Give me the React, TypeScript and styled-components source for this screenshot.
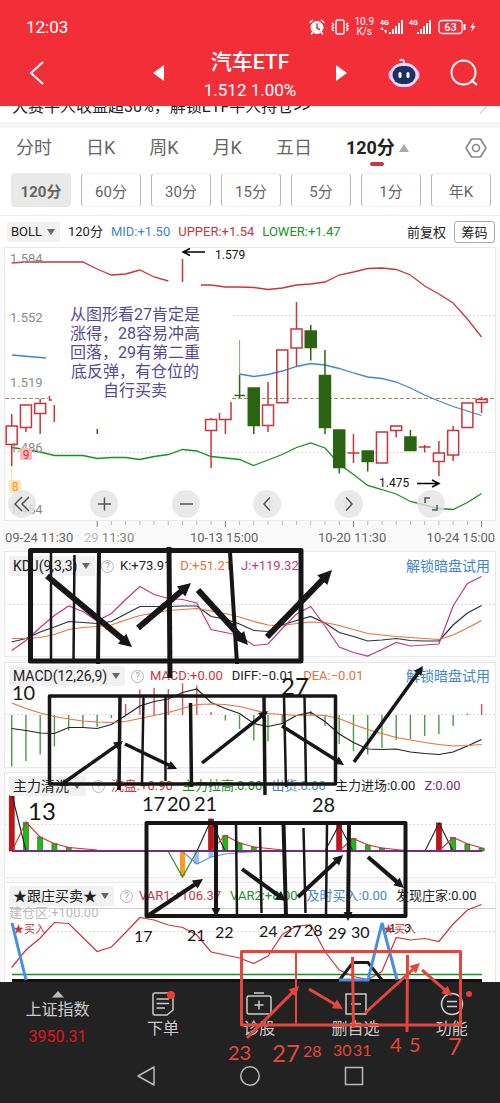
import React from 'react';
import styled, { createGlobalStyle } from 'styled-components';

const C = {
  brand: '#f22f38',
  up: '#c9353d',
  down: '#2b6412',
  red: '#c9353d',
  blue: '#3f86cc',
  green: '#17911f',
  orange: '#e8713a',
  magenta: '#c23a7e',
  purple: '#7a2a80',
  ink: '#222',
  marker: '#161616',
  redMarker: '#e5453b',
  dark: '#222',
};

const GlobalStyle = createGlobalStyle`
  * { box-sizing: border-box; }
  body {
    margin: 0;
    background: #fff;
    font-family: Roboto, "Noto Sans CJK SC", sans-serif;
    color: #222;
  }
  button, select { font: inherit; color: inherit; border: 0; background: none; padding: 0; margin: 0; }
  svg { display: block; }
`;

const Page = styled.div`
  position: relative;
  overflow: hidden;
`;

const Header = styled.header`
  background: ${C.brand};
  color: #fff;
  height: 106px;
  padding-top: 14px;
`;

const StatusBar = styled.div`
  display: flex;
  align-items: center;
  height: 26px;
  padding: 0 24px 0 26px;
  font-size: 17px;
`;

const StatusIcons = styled.div`
  display: flex;
  align-items: center;
  margin-left: auto;
  gap: 6px;
`;

const Speed = styled.div`
  font-size: 10px;
  line-height: 10px;
  text-align: center;
`;

const TitleBar = styled.div`
  display: grid;
  grid-template-columns: 1fr auto 1fr;
  align-items: center;
  height: 66px;
  padding: 0 22px 0 28px;
`;

const TitleSide = styled.div<{ $end?: boolean }>`
  display: flex;
  align-items: center;
  justify-content: ${(p) => (p.$end ? 'flex-start' : 'space-between')};
  gap: ${(p) => (p.$end ? '30px' : '0')};
`;

const IconButton = styled.button`
  display: flex;
  flex: none;
`;

const TitleBlock = styled.div`
  width: 172px;
  padding-top: 5px;
  text-align: center;
`;

const Title = styled.h1`
  margin: 0;
  font-size: 21px;
  line-height: 28px;
  font-weight: 500;
`;

const Quote = styled.div`
  font-size: 17px;
  line-height: 28px;
`;

const Promo = styled.a`
  display: flex;
  align-items: flex-end;
  justify-content: space-between;
  height: 22px;
  padding: 0 12px;
  overflow: hidden;
  border-bottom: 6px solid #f5f5f5;
  color: #222;
  font-size: 16px;
  line-height: 30px;
  text-decoration: none;
`;

const PeriodTabs = styled.nav`
  display: flex;
  align-items: center;
  height: 40px;
  padding: 0 13px 0 16px;
`;

const PeriodTab = styled.button<{ $active?: boolean }>`
  position: relative;
  flex: none;
  margin-right: ${(p) => (p.$active ? '4px' : '34px')};
  font-size: 18px;
  line-height: 36px;
  color: ${(p) => (p.$active ? '#222' : '#666')};
  font-weight: ${(p) => (p.$active ? 700 : 400)};
  &::after {
    content: '';
    display: ${(p) => (p.$active ? 'block' : 'none')};
    position: absolute;
    left: 50%;
    bottom: 0;
    width: 14px;
    height: 4px;
    border-radius: 2px;
    background: ${C.up};
  }
`;

const Push = styled.span`
  margin-left: auto;
`;

const Pills = styled.div`
  display: flex;
  gap: 10px;
  height: 48px;
  padding: 5px 0 9px 11px;
  overflow: hidden;
  border-bottom: 1px solid #eee;
`;

const Pill = styled.button<{ $active?: boolean }>`
  flex: none;
  width: 60px;
  height: 34px;
  border: 1px solid ${(p) => (p.$active ? '#e9e9e9' : '#b8b8b8')};
  border-top-color: ${(p) => (p.$active ? '#e9e9e9' : '#f0f0f0')};
  border-bottom-color: ${(p) => (p.$active ? '#e9e9e9' : '#f0f0f0')};
  border-radius: 4px;
  background: ${(p) => (p.$active ? '#e9e9e9' : '#fff')};
  color: #666;
  font-size: 15px;
  font-weight: ${(p) => (p.$active ? 700 : 400)};
`;

const LegendRow = styled.div`
  display: flex;
  align-items: center;
  gap: 8px;
  height: 31px;
  padding: 0 5px 0 7px;
  font-size: 13px;
  white-space: nowrap;
`;

const SmallText = styled.span<{ $color?: string }>`
  line-height: 20px;
  color: ${(p) => p.$color || C.ink};
`;

const ChipButton = styled.button`
  width: 41px;
  height: 22px;
  border: 1px solid #aaa;
  border-radius: 3px;
  font-size: 13px;
`;

const Picker = styled.label<{ $size: number }>`
  display: inline-flex;
  align-items: center;
  gap: 3px;
  height: 20px;
  padding: 0 4px;
  background: #f1f1f1;
  border-radius: 2px;
  font-size: ${(p) => p.$size}px;
`;

const PickerSelect = styled.select`
  appearance: none;
  outline: 0;
  line-height: 20px;
`;

const ChartArea = styled.section`
  position: relative;
  background: #fafafa;
`;

const Drawing = styled.svg`
  width: 100%;
  height: auto;
  overflow: visible;
`;

const Note = styled.p`
  position: absolute;
  left: 0;
  top: 58px;
  width: 54%;
  margin: 0;
  font-size: 16px;
  line-height: 19px;
  text-align: center;
  color: #554a97;
`;

const Controls = styled.div`
  position: absolute;
  left: 8px;
  right: 55px;
  top: 243px;
  display: flex;
  justify-content: space-between;
`;

const RoundButton = styled.button`
  display: flex;
  align-items: center;
  justify-content: center;
  width: 28px;
  height: 28px;
  border-radius: 50%;
  background: rgba(228, 228, 228, 0.8);
`;

const Panel = styled.section<{ $cut?: boolean }>`
  display: grid;
  height: ${(p) => (p.$cut ? 101 : 110)}px;
  overflow: ${(p) => (p.$cut ? 'hidden' : 'visible')};
  background: #fafafa;
  > * { grid-area: 1 / 1; }
`;

const PanelHead = styled.div`
  display: flex;
  align-items: center;
  gap: 6px;
  height: 20px;
  margin-top: 5px;
  padding: 0 10px 0 9px;
  font-size: 13px;
  white-space: nowrap;
  z-index: 1;
`;

const Values = styled.div`
  display: flex;
  align-items: baseline;
  gap: 9px;
  line-height: 20px;
`;

const Help = styled.button`
  width: 13px;
  height: 13px;
  flex: none;
  border: 1px solid #b5b5b5;
  border-radius: 50%;
  color: #aaa;
  font-size: 10px;
  line-height: 11px;
`;

const Unlock = styled.a`
  margin-left: auto;
  color: ${C.blue};
  font-size: 14px;
  line-height: 20px;
  text-decoration: none;
`;

const BottomNav = styled.nav`
  display: grid;
  grid-template-columns: 115px repeat(4, 1fr);
  height: 68px;
  background: ${C.dark};
  color: #ccc;
`;

const NavItem = styled.button`
  position: relative;
  display: flex;
  flex-direction: column;
  align-items: center;
  padding-top: 8px;
  font-size: 16px;
  line-height: 24px;
`;

const IndexValue = styled.span`
  color: #e0161c;
  line-height: 30px;
`;

const Dot = styled.span<{ $far?: boolean }>`
  position: absolute;
  top: 9px;
  left: ${(p) => (p.$far ? '62px' : '52px')};
  width: ${(p) => (p.$far ? '6px' : '8px')};
  height: ${(p) => (p.$far ? '6px' : '8px')};
  border-radius: 50%;
  background: #ee3a33;
`;

const SystemNav = styled.div`
  display: flex;
  justify-content: center;
  align-items: flex-start;
  gap: 84px;
  height: 53px;
  padding-top: 16px;
  background: ${C.dark};
`;

const Markup = styled.svg`
  position: absolute;
  left: 0;
  top: 0;
  width: 100%;
  height: 100%;
  pointer-events: none;
  z-index: 2;
`;

/* ---------- chart data ---------- */

const xAt = (i: number) => 11.7 + 14.24 * i;
const pts = (values: number[], start = 0) =>
  values.map((v, k) => `${xAt(start + k).toFixed(1)},${v}`).join(' ');

/* index, high, body top, body bottom, low, rising */
type Candle = [number, number, number, number, number, boolean];
const candles: Candle[] = [
  [0, 414, 426, 444.5, 466, true],
  [1, 405, 405, 427.5, 432, true],
  [2, 399, 403.5, 413.5, 434, true],
  [14, 418, 419.5, 430.5, 468, true],
  [17, 388, 388, 425.5, 434, false],
  [18, 382, 405, 425.5, 432, true],
  [19, 350, 350, 402.7, 402.7, true],
  [20, 302, 329, 348, 366, true],
  [21, 325, 331, 347.5, 360.5, false],
  [22, 350, 375.5, 427.5, 434, false],
  [23, 430, 430, 467.5, 473.5, false],
  [24, 434, 453, 453, 463, true],
  [25, 451, 451, 461.5, 471.5, false],
  [26, 432, 432, 463, 463, true],
  [27, 426, 426, 430.5, 437.5, true],
  [28, 430, 437, 450.5, 450.5, false],
  [29, 445, 447, 447, 452.5, true],
  [30, 441, 453, 461.5, 476, true],
  [31, 426, 430.5, 455, 461, true],
  [32, 403, 403, 427.5, 427.5, true],
  [33, 397, 399.5, 402.5, 413, true],
];

const upperA = [263, 262, 262, 262, 262, 262, 269, 275, 274, 270, 277, 281];
const upperB = [285, 287, 287, 287.5, 289.5, 288, 285, 284, 282, 275, 272, 268.5, 268, 269.5, 275, 286, 294, 303, 319, 337];
const mid = [374, 376.5, 374.5, 371, 366.5, 363.5, 365, 368.5, 373, 377, 378.5, 382, 388, 395, 401, 406.5, 411, 415.5];
const lower = [447.5, 449.5, 452, 455.5, 455.5, 455.5, 458.5, 457.5, 457.5, 459.5, 456.5, 454.5, 449.5, 451, 456.5, 458, 459.5, 465.5, 460, 454.5, 447.5, 443, 448, 464, 474.5, 485.5, 489.5, 494, 501.5, 505, 508.5, 509.5, 502.5, 493.5];

const kdjJ = [650.5, 640.5, 627.5, 615.5, 606, 611.5, 621, 613.5, 599.5, 586.5, 594.5, 598.5, 599.5, 603, 629.5, 632.5, 635.5, 645.5, 644, 628.5, 614, 606.5, 626, 647, 652.5, 656, 649.5, 642.5, 646, 645, 644, 606, 583.5, 576.5];
const kdjK = [642, 638.5, 632, 627, 621.5, 622.5, 623.5, 621.5, 614, 606.5, 606.5, 606.5, 606, 606, 616.5, 619, 624, 630.5, 631.5, 625, 620.5, 616.5, 623, 632.5, 636.5, 641, 640, 638.5, 640.5, 641, 641, 625, 613, 605.5];
const kdjD = [638.5, 638.5, 637.5, 634.5, 629.5, 627.5, 626.5, 625, 620, 615.5, 613, 610.5, 609.5, 608.5, 611, 613.5, 617, 621.5, 625, 625.5, 623.5, 622, 622.5, 625.5, 629.5, 633.5, 635, 636.5, 637.5, 638.5, 639.5, 635, 628, 620.5];

const diff = [728.5, 730.5, 733, 733.5, 727.5, 727.5, 728.5, 724.5, 715.5, 706, 701.5, 699, 692.5, 689, 702.5, 708.5, 713.5, 723.5, 726.5, 723.5, 715.5, 712.5, 721.5, 734, 742.5, 749, 749.5, 749, 752, 753.5, 754.5, 752, 746, 739.5];
const dea = [703, 708.5, 713, 716.5, 719, 721, 722, 722.5, 721.5, 718.5, 715.5, 712.5, 708.5, 704.5, 704, 704.5, 706.5, 710, 713.5, 714.5, 715.5, 715, 715.5, 718.5, 724.5, 729.5, 733.5, 737.5, 740, 742.5, 744.5, 746, 745.5, 744.5];
const macdBars = [766.5, 761, 754.5, 746.5, 730.5, 727, 727, 718, 704, 689.5, 688, 689, 683.5, 685.5, 712, 720.5, 729, 740.5, 741.5, 724, 716, 711, 726, 744, 751, 754.5, 748, 740, 739, 736, 734, 726, 713.5, 704];

const redBars: [number, number][] = [[0, 795], [14, 819], [23, 825], [30, 823]];
const greenBars: [number, number][] = [
  [1, 822.5], [2, 837], [3, 843.5], [4, 847.5], [15, 835.5], [16, 843], [17, 847],
  [24, 838.5], [25, 845], [26, 848], [31, 837.5], [32, 844], [33, 848],
];

const var1 = [967.5, 950, 938, 922.5, 923.5, 937.5, 951.5, 947, 932.5, 917.5, 920, 925, 927.5, 935, 952, 955, 958, 963.5, 956, 934.5, 926, 925, 951.5, 970, 976.5, 979.5, 971.5, 937.5, 940, 938.5, 941.5, 924, 910, 904.5];

/* ---------- shared pieces ---------- */

const Caret = ({ up, color = '#666' }: { up?: boolean; color?: string }) => (
  <svg width="10" height="8" viewBox="0 0 10 8">
    <path d={up ? 'M5 0L10 8H0z' : 'M1 1H9L5 7z'} fill={color} />
  </svg>
);

const IndicatorPicker = ({ name, size = 14 }: { name: string; size?: number }) => (
  <Picker $size={size}>
    <PickerSelect aria-label={name} defaultValue={name}>
      <option>{name}</option>
    </PickerSelect>
    <Caret />
  </Picker>
);

const Frame = ({ y, h, dash }: { y: number; h: number; dash: number }) => (
  <>
    <rect x="4.5" y={y + 0.5} width="491" height={h} fill="#fff" stroke="#e9e9e9" />
    <path d={`M5 ${dash}.5H495`} stroke="#ddd" strokeDasharray="2 2" />
  </>
);

type ArrowProps = { from: [number, number]; to: [number, number]; w?: number; head?: number; color?: string };
const Arrow = ({ from, to, w = 4, head = 11, color = C.marker }: ArrowProps) => {
  const a = Math.atan2(to[1] - from[1], to[0] - from[0]);
  const bx = to[0] - Math.cos(a) * head;
  const by = to[1] - Math.sin(a) * head;
  const s = head * 0.5;
  const p = [
    [to[0], to[1]],
    [bx - Math.sin(a) * s, by + Math.cos(a) * s],
    [bx + Math.sin(a) * s, by - Math.cos(a) * s],
  ];
  return (
    <g>
      <line x1={from[0]} y1={from[1]} x2={bx + Math.cos(a)} y2={by + Math.sin(a)} stroke={color} strokeWidth={w} />
      <polygon points={p.map((q) => q.map((n) => n.toFixed(1)).join(',')).join(' ')} fill={color} />
    </g>
  );
};

/* ---------- sections ---------- */

const TopHeader = () => (
  <Header>
    <StatusBar>
      12:03
      <StatusIcons>
        <svg width="16" height="16" viewBox="0 0 16 16" fill="none" stroke="#fff" strokeLinecap="round">
          <circle cx="8" cy="8.5" r="6" fill="#fff" />
          <path d="M1 3.5L3.5 1.2M15 3.5L12.5 1.2M3.5 13.5L2.5 15M12.5 13.5L13.5 15" strokeWidth="1.5" />
          <path d="M8 5V9L10.5 10.5" stroke={C.brand} strokeWidth="1.5" />
        </svg>
        <svg width="18" height="16" viewBox="0 0 18 16" fill="none" stroke="#fff" strokeWidth="1.4">
          <rect x="5" y="1" width="8" height="14" rx="1.5" />
          <path d="M1 4L2.5 5.5L1 7L2.5 8.5L1 10L2.5 12M17 4L15.5 5.5L17 7L15.5 8.5L17 10L15.5 12" />
        </svg>
        <Speed>10.9<br />K/s</Speed>
        <svg width="52" height="16" viewBox="0 0 52 16" fill="#fff">
          <text x="0" y="6" fontSize="7" fontWeight="700">4G</text>
          <text x="29" y="6" fontSize="7" fontWeight="700">4G</text>
          <path d="M0 11l2-3 2 3zM4 11l2 4 1-4zM9 13h2v2H9zM12 10h2v5h-2zM15 7h2v8h-2zM18 4h2v11h-2zM21 1h2v14h-2z" />
          <path d="M37 13h2v2h-2zM40 10h2v5h-2zM43 7h2v8h-2zM46 4h2v11h-2zM49 1h2v14h-2z" />
        </svg>
        <svg width="38" height="16" viewBox="0 0 38 16" fill="none" stroke="#fff" strokeWidth="1.3">
          <rect x="1" y="1.5" width="23" height="13" rx="3" />
          <path d="M26.5 5V11" strokeWidth="2" />
          <path d="M36 3L32 8.5H34.5L33 13L37.5 7H35z" fill="#fff" stroke="none" />
          <text x="12.5" y="12" fontSize="11" fontWeight="500" textAnchor="middle" fill="#fff" stroke="none">63</text>
        </svg>
      </StatusIcons>
    </StatusBar>
    <TitleBar>
      <TitleSide>
        <IconButton aria-label="返回">
          <svg width="18" height="26" viewBox="0 0 18 26" fill="none" stroke="#fff" strokeWidth="2"><path d="M15 2L3 13L15 24" /></svg>
        </IconButton>
        <IconButton aria-label="上一个">
          <svg width="11" height="16" viewBox="0 0 11 16"><path d="M0 8L11 0V16z" fill="#fff" /></svg>
        </IconButton>
      </TitleSide>
      <TitleBlock>
        <Title>汽车ETF</Title>
        <Quote>1.512 1.00%</Quote>
      </TitleBlock>
      <TitleSide $end>
        <IconButton aria-label="下一个">
          <svg width="22" height="16" viewBox="0 0 22 16"><path d="M0 0L11 8L0 16z" fill="#fff" /></svg>
        </IconButton>
        <IconButton aria-label="智能助手">
          <svg width="32" height="30" viewBox="0 0 32 30">
            <path d="M16 7V3Q14 1 11.5 2.5" fill="none" stroke="#f4dcf2" strokeWidth="2" />
            <rect x="0.5" y="11" width="31" height="12" rx="5" fill="#dbb5ee" />
            <rect x="2" y="5" width="28" height="24" rx="12" fill="#e9d8fa" />
            <rect x="4.5" y="8" width="23" height="18" rx="9" fill="#1d3160" />
            <rect x="10.5" y="14" width="3" height="6" rx="1.5" fill="#fff" />
            <rect x="18.5" y="14" width="3" height="6" rx="1.5" fill="#fff" />
          </svg>
        </IconButton>
        <IconButton aria-label="搜索">
          <svg width="28" height="28" viewBox="0 0 28 28" fill="none" stroke="#fff" strokeWidth="2">
            <circle cx="13.5" cy="13.5" r="12" /><path d="M21 21L27 26" />
          </svg>
        </IconButton>
      </TitleSide>
    </TitleBar>
  </Header>
);

const PriceChart = () => (
  <ChartArea>
    <Drawing viewBox="0 247 500 304">
      <Frame y={247} h={273} dash={315} />
      <path d="M5 452.5H495" stroke="#e0e0e0" strokeDasharray="2 2" />
      <rect x="46" y="300" width="186" height="104" fill="#fff" />
      <path d="M5 398.5H48M232 398.5H495" stroke="#a8895c" strokeDasharray="4 2" />
      <g fill="none" strokeWidth="1.3">
        <polyline points={pts(upperA)} stroke={C.red} />
        <polyline points={`201,285 ${pts(upperB, 14)}`} stroke={C.red} />
        <polyline points="12,355 46,358" stroke={C.blue} />
        <polyline points={pts(mid, 16)} stroke={C.blue} />
        <polyline points={pts(lower)} stroke={C.green} />
      </g>
      <g fontSize="13" fill="#8c8c8c">
        <text x="10" y="263">1.584</text>
        <text x="10" y="322">1.552</text>
        <text x="10" y="387">1.519</text>
        <text x="10" y="452">1.486</text>
        <text x="10" y="514">1.454</text>
      </g>
      {candles.map(([i, hi, top, bottom, lo, up]) => {
        const x = xAt(i);
        const color = up ? C.up : C.down;
        return (
          <g key={i} stroke={color} strokeWidth="1.5">
            <path d={`M${x} ${hi}V${top}M${x} ${bottom}V${lo}`} />
            {top === bottom ? (
              <path d={`M${x - 6} ${top}H${x + 6}`} />
            ) : (
              <rect x={x - 5.5} y={top} width="11" height={bottom - top} fill={up ? 'none' : color} />
            )}
          </g>
        );
      })}
      <g stroke={C.up} strokeWidth="1.5" fill="none">
        <path d="M182.5 259V282M54.3 405V422M49.5 396V400H52M219.5 413V419.5H231V402M225.4 419.5V434" />
      </g>
      <g stroke={C.down} strokeWidth="1.5">
        <path d="M97.3 429V434M239.6 375V398M234.5 395.5H245" />
        <path d="M239.6 340V375" strokeWidth="1" stroke="#88a080" />
      </g>
      <path d="M11.5 466V480" stroke="#ffd9a0" />
      <rect x="20" y="448" width="12" height="12" rx="1" fill="#ffb9b9" />
      <text x="26" y="459" fontSize="12" textAnchor="middle" fill="#d8343c">9</text>
      <rect x="9" y="480" width="12" height="13" rx="2" fill="#ffe4b8" />
      <text x="15" y="491" fontSize="12" textAnchor="middle" fill="#f09a20">8</text>
      <g fontSize="12" fill="#111">
        <text x="215" y="259">1.579</text>
        <text x="379" y="487">1.475</text>
      </g>
      <path d="M205 252H183M190 248.5L183 252L190 255.5M417 483.5H439M432 480L439 483.5L432 487" stroke="#000" strokeWidth="1.5" fill="none" />
      {Array.from({ length: 28 }, (_, k) => k + 6).map((i) => (
        <path key={i} d={`M${xAt(i)} 521v${i % 9 === 6 ? 6 : 4}`} stroke={i % 9 === 6 ? '#888' : '#bbb'} />
      ))}
      <g fontSize="13" fill="#666">
        <text x="5" y="542">09-24 11:30</text>
        <text x="84" y="542" fill="#888"><tspan fill="#bbb">29</tspan> 11:30</text>
        <text x="190" y="542">10-13 15:00</text>
        <text x="318" y="542">10-20 11:30</text>
        <text x="495" y="542" textAnchor="end">10-24 15:00</text>
      </g>
    </Drawing>
    <Note>从图形看27肯定是<br />涨得，28容易冲高<br />回落，29有第二重<br />底反弹，有仓位的<br />自行买卖</Note>
    <Controls>
      {[
        ['最早', 'M10 3L3 10L10 17M17 3L10 10L17 17'],
        ['放大', 'M4 10H17M10.5 3.5V16.5'],
        ['缩小', 'M4 10H17'],
        ['向左', 'M13 3.5L7 10L13 16.5'],
        ['向右', 'M7 3.5L13 10L7 16.5'],
        ['全屏', 'M4 9V4H9M16 11V16H11'],
      ].map(([label, d]) => (
        <RoundButton key={label} aria-label={label}>
          <svg width="20" height="20" viewBox="0 0 20 20" fill="none" stroke="#555" strokeWidth="1.5"><path d={d} /></svg>
        </RoundButton>
      ))}
    </Controls>
  </ChartArea>
);

const KdjPanel = () => (
  <Panel>
    <Drawing viewBox="0 551 500 110">
      <Frame y={551} h={105} dash={604} />
      <g fill="none" strokeWidth="1.2">
        <polyline points={pts(kdjK)} stroke="#25343a" />
        <polyline points={pts(kdjD)} stroke={C.orange} />
        <polyline points={pts(kdjJ)} stroke={C.magenta} />
      </g>
    </Drawing>
    <PanelHead>
      <IndicatorPicker name="KDJ(9,3,3)" />
      <Help>?</Help>
      <Values>
        <SmallText>K:+73.91</SmallText>
        <SmallText $color={C.orange}>D:+51.21</SmallText>
        <SmallText $color={C.magenta}>J:+119.32</SmallText>
      </Values>
      <Unlock href="#unlock">解锁暗盘试用</Unlock>
    </PanelHead>
  </Panel>
);

const MacdPanel = () => (
  <Panel>
    <Drawing viewBox="0 661 500 110">
      <Frame y={662} h={105} dash={714} />
      {macdBars.map((v, i) => (
        <path key={i} d={`M${xAt(i)} 715V${v}`} stroke={v < 715 ? '#d0525a' : '#4a9a48'} strokeWidth="1.4" />
      ))}
      <g fill="none" strokeWidth="1.2">
        <polyline points={pts(diff)} stroke="#222" />
        <polyline points={pts(dea)} stroke={C.orange} />
      </g>
    </Drawing>
    <PanelHead>
      <IndicatorPicker name="MACD(12,26,9)" />
      <Help>?</Help>
      <Values>
        <SmallText $color={C.red}>MACD:+0.00</SmallText>
        <SmallText>DIFF:−0.01</SmallText>
        <SmallText $color={C.orange}>DEA:−0.01</SmallText>
      </Values>
      <Unlock href="#unlock">解锁暗盘试用</Unlock>
    </PanelHead>
  </Panel>
);

const WashPanel = () => (
  <Panel>
    <Drawing viewBox="0 771 500 110">
      <Frame y={772} h={105} dash={824} />
      {redBars.map(([i, y]) => (
        <rect key={i} x={xAt(i) - 2.5} y={y} width="5" height={851 - y} fill="#c80f14" stroke="#7a0a0c" strokeWidth="0.6" />
      ))}
      {greenBars.map(([i, y]) => (
        <rect key={i} x={xAt(i) - 2.5} y={y} width="5" height={851 - y} fill="#12c01c" stroke="#7a3a10" strokeWidth="0.6" />
      ))}
      <rect x="180" y="851" width="5" height="25" fill="#ff9c1a" />
      <rect x="194" y="851" width="5" height="13" fill="#8fc2f5" />
      <rect x="208.5" y="851" width="5" height="6" fill="#8fc2f5" />
      <g fill="none" strokeWidth="1.1">
        <path d="M12 795L26 851M197 851L211 820L225 851M325 851L339 825L353 851M425 851L439 823L453 851" stroke="#222" />
        <path d="M12 851L26 822L40 837L54 843.5L69 847.5L97 850M211 851L225 835.5L240 843L254 847L283 850M339 851L353 838.5L368 845L382 848L410 851M439 851L453 837.5L468 844L482 848" stroke={C.up} />
        <path d="M168 851L182.5 877L197 851" stroke={C.green} />
        <path d="M182 851L197 864L211 857L225 854L247 852L270 851" stroke="#5a92e0" />
      </g>
      <path d="M12 851H482" stroke={C.purple} strokeWidth="1.8" />
    </Drawing>
    <PanelHead>
      <IndicatorPicker name="主力清洗" />
      <Help>?</Help>
      <Values>
        <SmallText $color={C.red}>洗盘:+0.90</SmallText>
        <SmallText $color={C.green}>主力拉高:0.00</SmallText>
        <SmallText $color={C.blue}>出货:0.00</SmallText>
        <SmallText>主力进场:0.00</SmallText>
        <SmallText $color={C.purple}>Z:0.00</SmallText>
      </Values>
    </PanelHead>
  </Panel>
);

const FollowPanel = () => (
  <Panel $cut>
    <Drawing viewBox="0 881 500 101">
      <Frame y={882} h={105} dash={931} />
      <path d="M9 908.5H495" stroke="#ccc" />
      <text x="9" y="917" fontSize="13" fill="#bbb">建仓区:+100.00</text>
      <text x="13" y="933" fontSize="11" fill={C.up}>★买入</text>
      <text x="383" y="933" fontSize="11" fill={C.up}>★买入</text>
      <path d="M12 974.5H482" stroke={C.green} strokeWidth="1.5" />
      <path d="M12 980.5H482" stroke="#111" strokeWidth="3" />
      <polyline points={pts(var1)} fill="none" stroke={C.red} strokeWidth="1.2" />
      <path d="M339.5 980L353 962.5H368L382 980" fill="none" stroke="#1a1a1a" strokeWidth="3" />
      <path d="M12 923L26 980M339 980H368L382 923L397 980" fill="none" stroke="#4a8ee0" strokeWidth="3" />
    </Drawing>
    <PanelHead>
      <IndicatorPicker name="★跟庄买卖★" />
      <Help>?</Help>
      <Values>
        <SmallText $color={C.red}>VAR1:+106.37</SmallText>
        <SmallText $color={C.green}>VAR2:+8.00</SmallText>
        <SmallText $color={C.blue}>及时买入:0.00</SmallText>
        <SmallText>发现庄家:0.00</SmallText>
      </Values>
    </PanelHead>
  </Panel>
);

const Footer = () => (
  <>
    <BottomNav>
      <NavItem>
        <svg width="12" height="8" viewBox="0 0 12 8"><path d="M6 1L12 7.5H0z" fill="#bbb" /></svg>
        <span>上证指数</span>
        <IndexValue>3950.31</IndexValue>
      </NavItem>
      <NavItem>
        <svg width="24" height="27" viewBox="0 0 24 27" fill="none" stroke="#ccc" strokeWidth="1.5">
          <path d="M4 3H20Q22 3 22 5V20L16 25H4Q2 25 2 23V5Q2 3 4 3zM5.5 9H18M5.5 13.5H18M5.5 18H14" />
        </svg>
        <Dot />
        <span>下单</span>
      </NavItem>
      <NavItem>
        <svg width="26" height="27" viewBox="0 0 26 27" fill="none" stroke="#ccc" strokeWidth="1.5">
          <rect x="1" y="6" width="24" height="18" rx="2" /><path d="M8 3H18M13 10.5V19.5M8.5 15H17.5" />
        </svg>
        <span>诊股</span>
      </NavItem>
      <NavItem>
        <svg width="24" height="27" viewBox="0 0 24 27" fill="none" stroke="#ccc" strokeWidth="1.5">
          <rect x="2" y="4" width="20" height="20" /><path d="M7 14H17" />
        </svg>
        <span>删自选</span>
      </NavItem>
      <NavItem>
        <svg width="24" height="27" viewBox="0 0 24 27" fill="none" stroke="#ccc" strokeWidth="1.5">
          <circle cx="12" cy="14" r="10.5" /><path d="M7 11.5H17M7 16.5H17" />
        </svg>
        <Dot $far />
        <span>功能</span>
      </NavItem>
    </BottomNav>
    <SystemNav>
      <IconButton aria-label="后退">
        <svg width="20" height="20" viewBox="0 0 20 20" fill="none" stroke="#bbb" strokeWidth="1.5"><path d="M2 10L18 1V19z" strokeLinejoin="round" /></svg>
      </IconButton>
      <IconButton aria-label="主页">
        <svg width="20" height="20" viewBox="0 0 20 20" fill="none" stroke="#bbb" strokeWidth="1.5"><circle cx="10" cy="10" r="9.2" /></svg>
      </IconButton>
      <IconButton aria-label="最近任务">
        <svg width="20" height="20" viewBox="0 0 20 20" fill="none" stroke="#bbb" strokeWidth="1.5"><rect x="1.5" y="1.5" width="17" height="17" /></svg>
      </IconButton>
    </SystemNav>
  </>
);

/* hand-placed date notes: x, baseline, size, text */
type DateNote = [number, number, number, string];
const blackNotes: DateNote[] = [
  [12, 700, 20, '10'], [28, 820, 24, '13'], [142, 811, 20, '17'], [167, 811, 20, '20'],
  [194, 811, 20, '21'], [281, 695, 24, '27'], [312, 812, 20, '28'], [134, 942, 16, '17'],
  [187, 941, 16, '21'], [215, 938, 16, '22'], [259, 937, 16, '24'], [283, 937, 16, '27'],
  [304, 936, 16, '28'], [328, 939, 16, '29'], [351, 938, 16, '30'], [389, 932, 12, '1'], [404, 932, 12, '3'],
];
const redNotes: DateNote[] = [
  [228, 1060, 20, '23'], [272, 1062, 24, '27'], [303, 1057, 16, '28'], [333, 1056, 16, '30'],
  [353, 1056, 16, '31'], [390, 1052, 20, '4'], [409, 1052, 20, '5'], [448, 1055, 24, '7'],
];

const Annotations = () => (
  <Markup viewBox="0 0 500 1103" preserveAspectRatio="none">
    <g fill="none" stroke={C.marker} strokeLinejoin="round">
      <rect x="30.5" y="550.5" width="270.5" height="110.5" strokeWidth="5" />
      <path d="M51 553V660M74.5 555L73.5 660" strokeWidth="2.5" />
      <path d="M99 553L98 664M230 552L237 664" strokeWidth="4" />
      <path d="M169 547L170 678" strokeWidth="5" />
      <rect x="49.5" y="696" width="286" height="88" strokeWidth="3.5" />
      <path d="M120 697L119 790M190.5 703L191.5 787M264 697L265 795" strokeWidth="3.5" />
      <path d="M143.5 697L142 783M165.5 697V781M284 697L286 787M304.5 697L306 783" strokeWidth="2.5" />
      <rect x="146.5" y="823" width="259" height="93" strokeWidth="4" />
      <path d="M283.5 823L286 916" strokeWidth="4" />
      <path d="M236 823L237 915M260 827L261.5 913M303.5 828L305.5 913M327 825L326 915" strokeWidth="2.5" />
    </g>
    <Arrow from={[47, 576]} to={[132, 647]} w={6} head={13} />
    <Arrow from={[138, 628]} to={[191, 583]} w={6} head={13} />
    <Arrow from={[198, 590]} to={[248, 645]} w={6} head={13} />
    <Arrow from={[267, 637]} to={[332, 570]} w={6} head={14} />
    <Arrow from={[62, 784]} to={[123, 741]} w={3.5} head={9} />
    <Arrow from={[125, 744]} to={[177, 769]} w={3.5} head={9} />
    <Arrow from={[202, 763]} to={[268, 711]} w={3.5} head={9} />
    <Arrow from={[282, 726]} to={[344, 765]} w={3.5} head={9} />
    <Arrow from={[354, 762]} to={[423, 666]} w={3.5} head={9} />
    <Arrow from={[216, 824]} to={[216, 917]} head={9} />
    <Arrow from={[349, 825]} to={[348, 921]} head={9} />
    <Arrow from={[149, 915]} to={[203, 879]} head={10} />
    <Arrow from={[242, 869]} to={[286, 901]} head={10} />
    <Arrow from={[298, 897]} to={[343, 855]} head={10} />
    <Arrow from={[368, 857]} to={[404, 888]} head={10} />
    <g fontFamily="Lato, sans-serif" fill={C.marker}>
      {blackNotes.map(([x, y, s, t]) => <text key={`${x}-${y}`} x={x} y={y} fontSize={s}>{t}</text>)}
    </g>
    <g fill="none" stroke={C.redMarker} strokeLinejoin="round">
      <rect x="241.5" y="951.5" width="219" height="73.5" strokeWidth="3" />
      <path d="M296 952V1025" strokeWidth="2" />
      <path d="M352.5 957L353.5 1028M407.5 955L407 1032" strokeWidth="3" />
    </g>
    <Arrow from={[247, 1038]} to={[299, 986]} w={3} head={10} color={C.redMarker} />
    <Arrow from={[309, 989]} to={[343, 1009]} w={3} head={10} color={C.redMarker} />
    <Arrow from={[365, 1013]} to={[420, 963]} w={3} head={10} color={C.redMarker} />
    <Arrow from={[422, 970]} to={[452, 996]} w={3} head={10} color={C.redMarker} />
    <g fontFamily="Lato, sans-serif" fill={C.redMarker}>
      {redNotes.map(([x, y, s, t]) => <text key={`${x}-${y}`} x={x} y={y} fontSize={s}>{t}</text>)}
    </g>
  </Markup>
);

export default function App() {
  return (
    <Page>
      <GlobalStyle />
      <TopHeader />
      <Promo href="#promo">
        <span>大赛牛人收益超30%，解锁ETF牛人持仓&gt;&gt;</span>
        <svg width="9" height="16" viewBox="0 0 9 16" fill="none" stroke="#bbb"><path d="M8 0L1 8" /></svg>
      </Promo>
      <PeriodTabs>
        {['分时', '日K', '周K', '月K', '五日'].map((t) => <PeriodTab key={t}>{t}</PeriodTab>)}
        <PeriodTab $active>120分</PeriodTab>
        <Caret up color="#aaa" />
        <Push>
          <IconButton aria-label="设置">
            <svg width="22" height="22" viewBox="0 0 22 22" fill="none" stroke="#888" strokeWidth="1.6">
              <path d="M6.5 2H15.5L21 11L15.5 20H6.5L1 11z" strokeLinejoin="round" /><circle cx="11" cy="11" r="3.5" />
            </svg>
          </IconButton>
        </Push>
      </PeriodTabs>
      <Pills>
        {['120分', '60分', '30分', '15分', '5分', '1分', '年K'].map((t, i) => <Pill key={t} $active={i === 0}>{t}</Pill>)}
      </Pills>
      <LegendRow>
        <IndicatorPicker name="BOLL" size={13} />
        <SmallText>120分</SmallText>
        <SmallText $color={C.blue}>MID:+1.50</SmallText>
        <SmallText $color={C.red}>UPPER:+1.54</SmallText>
        <SmallText $color={C.green}>LOWER:+1.47</SmallText>
        <Push>前复权</Push>
        <ChipButton>筹码</ChipButton>
      </LegendRow>
      <PriceChart />
      <KdjPanel />
      <MacdPanel />
      <WashPanel />
      <FollowPanel />
      <Footer />
      <Annotations />
    </Page>
  );
}
